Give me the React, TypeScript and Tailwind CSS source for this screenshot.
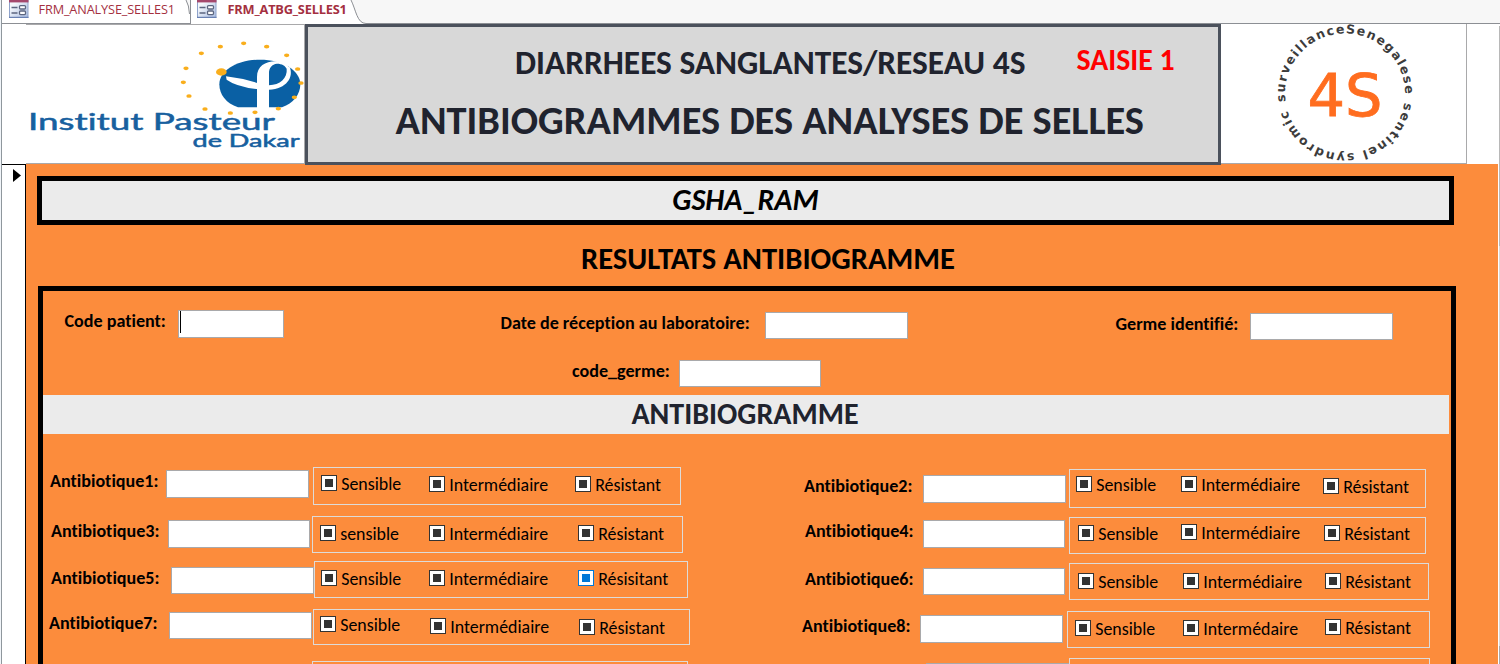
type OptionSpec = { text: string; box: string; active?: boolean };
type RowSpec = {
  label: string;
  row: string;
  labelBox: string;
  input: string;
  group: string;
  options: OptionSpec[];
};

const leftRows: RowSpec[] = [
  {
    label: "Antibiotique1:",
    row: "mt-[33px] h-[38px]",
    labelBox: "ml-[7px] mt-[4px] w-[116px]",
    input: "mt-[3px] h-[28px] w-[143px]",
    group: "ml-[4px] w-[368px]",
    options: [
      { text: "Sensible", box: "ml-[7px] mt-[7px] w-[108px]" },
      { text: "Intermédiaire", box: "mt-[8px] w-[146px]" },
      { text: "Résistant", box: "mt-[8px]" },
    ],
  },
  {
    label: "Antibiotique3:",
    row: "mt-[11px] h-[37px]",
    labelBox: "ml-[8px] mt-[5px] w-[117px]",
    input: "mt-[4px] h-[28px] w-[142px]",
    group: "ml-[2px] w-[371px]",
    options: [
      { text: "sensible", box: "ml-[7px] mt-[8px] w-[109px]" },
      { text: "Intermédiaire", box: "mt-[8px] w-[149px]" },
      { text: "Résistant", box: "mt-[8px]" },
    ],
  },
  {
    label: "Antibiotique5:",
    row: "mt-[8px] h-[37px]",
    labelBox: "ml-[8px] mt-[7px] w-[120px]",
    input: "mt-[6px] h-[27px] w-[143px]",
    group: "w-[374px]",
    options: [
      { text: "Sensible", box: "ml-[6px] mt-[8px] w-[108px]" },
      { text: "Intermédiaire", box: "mt-[8px] w-[149px]" },
      { text: "Résisitant", box: "mt-[8px]", active: true },
    ],
  },
  {
    label: "Antibiotique7:",
    row: "mt-[11px] h-[36px]",
    labelBox: "ml-[6px] mt-[4px] w-[120px]",
    input: "mt-[3px] h-[27px] w-[143px]",
    group: "ml-[1px] w-[377px]",
    options: [
      { text: "Sensible", box: "ml-[6px] mt-[6px] w-[110px]" },
      { text: "Intermédiaire", box: "mt-[8px] w-[149px]" },
      { text: "Résistant", box: "mt-[9px]" },
    ],
  },
];

const rightRows: RowSpec[] = [
  {
    label: "Antibiotique2:",
    row: "mt-[35px] h-[39px]",
    labelBox: "ml-[4px] mt-[7px] w-[119px]",
    input: "mt-[6px] h-[28px] w-[143px]",
    group: "ml-[3px] w-[357px]",
    options: [
      { text: "Sensible", box: "ml-[6px] mt-[6px] w-[105px]" },
      { text: "Intermédiaire", box: "mt-[6px] w-[142px]" },
      { text: "Résistant", box: "mt-[8px]" },
    ],
  },
  {
    label: "Antibiotique4:",
    row: "mt-[9px] h-[37px]",
    labelBox: "ml-[5px] mt-[4px] w-[118px]",
    input: "mt-[3px] h-[28px] w-[142px]",
    group: "ml-[4px] w-[357px]",
    options: [
      { text: "Sensible", box: "ml-[8px] mt-[7px] w-[103px]" },
      { text: "Intermédiaire", box: "mt-[6px] w-[143px]" },
      { text: "Résistant", box: "mt-[7px]" },
    ],
  },
  {
    label: "Antibiotique6:",
    row: "mt-[9px] h-[37px]",
    labelBox: "ml-[5px] mt-[6px] w-[118px]",
    input: "mt-[5px] h-[27px] w-[142px]",
    group: "ml-[4px] w-[360px]",
    options: [
      { text: "Sensible", box: "ml-[8px] mt-[9px] w-[105px]" },
      { text: "Intermédiaire", box: "mt-[9px] w-[142px]" },
      { text: "Résistant", box: "mt-[9px]" },
    ],
  },
  {
    label: "Antibiotique8:",
    row: "mt-[11px] h-[37px]",
    labelBox: "ml-[2px] mt-[5px] w-[118px]",
    input: "mt-[4px] h-[28px] w-[143px]",
    group: "ml-[4px] w-[363px]",
    options: [
      { text: "Sensible", box: "ml-[7px] mt-[8px] w-[108px]" },
      { text: "Intermédaire", box: "mt-[8px] w-[142px]" },
      { text: "Résistant", box: "mt-[7px]" },
    ],
  },
];

const labelText = "shrink-0 text-[18.1px] leading-[20px] font-bold whitespace-nowrap text-black";
const field = "shrink-0 border border-[#a9a9ab] bg-white";

function Option({ text, box, active }: OptionSpec) {
  return (
    <div className={`flex shrink-0 items-start ${box}`}>
      <span
        className={`flex size-[16px] shrink-0 items-center justify-center border bg-white ${
          active ? "border-[#0078d7]" : "border-[#333333]"
        }`}
      >
        <span className={`size-[8px] ${active ? "bg-[#0078d7]" : "bg-[#333333]"}`} />
      </span>
      <span className="-mt-px ml-[4.2px] text-[17.9px] leading-[20px] whitespace-nowrap text-black">{text}</span>
    </div>
  );
}

function Row({ label, row, labelBox, input, group, options }: RowSpec) {
  return (
    <div className={`flex shrink-0 items-start ${row}`}>
      <div className={`${labelText} ${labelBox}`}>{label}</div>
      <div className={`${field} ${input}`} />
      <div className={`flex h-full shrink-0 items-start border border-[#dddbd9] ${group}`}>
        {options.map((o) => (
          <Option key={o.text} {...o} />
        ))}
      </div>
    </div>
  );
}

function FormIcon() {
  return (
    <svg className="block shrink-0" width="20" height="18" viewBox="0 0 20 18">
      <defs>
        <linearGradient id="sheet" x1="0" y1="0" x2="1" y2="1">
          <stop offset="0.3" stopColor="#f4f7fc" />
          <stop offset="1" stopColor="#a9bce0" />
        </linearGradient>
      </defs>
      <rect x="0.5" y="-3" width="18.5" height="20.5" fill="url(#sheet)" stroke="#8fa3cb" />
      <rect x="0" y="0" width="19.5" height="2.4" fill="#a5486c" />
      <path d="M0 17.3H19.5" stroke="#5f78ad" />
      <path d="M2.5 7.5H8.5M2.5 13H8.5" stroke="#5c6680" strokeWidth="1.4" />
      <rect x="10.5" y="5.6" width="6" height="3.4" rx="1" fill="#fff" stroke="#5c6680" strokeWidth="1.3" />
      <rect x="10.5" y="11" width="6" height="3.6" rx="1" fill="#fff" stroke="#5c6680" strokeWidth="1.3" />
    </svg>
  );
}

const stars: [number, number][] = [
  [30, 94], [22, 136], [39, 177], [87, 216], [76, 49], [133, 29], [203, 19], [272, 29],
  [332, 55], [365, 96], [375, 138], [355, 181], [307, 215], [237, 226], [163, 228],
];

function PasteurLogo() {
  return (
    <svg className="block" width="278" height="138" viewBox="26 25 278 138">
      <g transform="translate(176 37) scale(0.33333)">
        <path
          d="M186 211C150 200 130 172 130 142C130 100 185 68 252 68C320 68 373 100 373 142C373 172 352 200 318 211Z"
          fill="#0a60a4"
        />
        <g fill="#fff">
          <path d="M150 118Q204 124 262 144V158Q185 152 152 128Z" />
          <path d="M243 216V120C243 88 268 73 298 73C318 73 334 82 343 96L334 98C328 86 318 80 303 80C288 82 279 92 279 108V216Z" />
          <path d="M341 90C354 120 332 156 279 158V145C312 144 335 125 332 94Z" />
        </g>
        {stars.map(([x, y]) => (
          <ellipse key={`${x}-${y}`} cx={x} cy={y} rx="8" ry="5.5" fill="#f9ae1c" />
        ))}
        <ellipse cx="136" cy="105" rx="16" ry="11" fill="#f9ae1c" />
      </g>
      <g fill="#17609f" stroke="#17609f" strokeWidth="0.5" fontFamily="Lato, sans-serif">
        <text x="28" y="129.5" fontSize="23.5" textLength="247" lengthAdjust="spacingAndGlyphs">
          Institut Pasteur
        </text>
        <text x="192.5" y="146.5" fontSize="17.5" textLength="107" lengthAdjust="spacingAndGlyphs">
          de Dakar
        </text>
      </g>
    </svg>
  );
}

const ringWords = [
  { text: "surveillance", start: 7.5, length: 102 },
  { text: "Senegalese", start: 110.5, length: 94 },
  { text: "sentinel", start: 213, length: 68 },
  { text: "syndromic", start: 289, length: 86 },
];

function NetworkLogo() {
  return (
    <svg className="block overflow-visible" width="245" height="138" viewBox="1221 25 245 138">
      <defs>
        <path id="ring" d="M1287.04 109.03A60 60 0 1 1 1402.96 77.97A60 60 0 1 1 1287.04 109.03" fill="none" />
      </defs>
      <g fontFamily="'DejaVu Sans', sans-serif" fontSize="12.5" fontWeight="700" fill="#3c3c3c">
        {ringWords.map((w) => (
          <text key={w.text}>
            <textPath href="#ring" startOffset={w.start} textLength={w.length}>
              {w.text}
            </textPath>
          </text>
        ))}
      </g>
      <text
        x="1307.5"
        y="116"
        fontFamily="'DejaVu Sans', sans-serif"
        fontSize="58.5"
        textLength="75"
        lengthAdjust="spacingAndGlyphs"
        fill="#ff6d1f"
        stroke="#ff6d1f"
        strokeWidth="0.8"
      >
        4S
      </text>
    </svg>
  );
}

function TabBar() {
  return (
    <div className="flex h-[24px] shrink-0 font-['Open_Sans',sans-serif] leading-[18px] whitespace-nowrap text-[#a4303f]">
      <div className="flex h-full w-[189px] shrink-0 border-r border-b border-[#8c8f94] bg-white pl-[7px]">
        <FormIcon />
        <span className="ml-[9.5px] w-[146.5px] text-[12.7px] tracking-[-0.12px]">FRM_ANALYSE_SELLES1</span>
        <svg className="block" width="5" height="14" viewBox="0 0 5 14">
          <path d="M1 0H5V13Z" fill="#f7f7f7" />
          <path d="M1 0Q4 5 4.5 14" fill="none" stroke="#8c8f94" />
        </svg>
      </div>
      <div className="flex h-full w-[158px] shrink-0 bg-white pl-[6px]">
        <FormIcon />
        <span className="ml-[10.5px] text-[12.8px] font-bold tracking-[-0.2px]">FRM_ATBG_SELLES1</span>
      </div>
      <svg className="block shrink-0" width="17" height="24" viewBox="0 0 17 24">
        <rect width="17" height="24" fill="#f7f7f7" />
        <path d="M0 0H2C7 10 8 23.5 17 23.5V24H0Z" fill="#fff" />
        <path d="M2 0C7 10 8 23.5 17 23.5" fill="none" stroke="#8c8f94" />
      </svg>
      <div className="h-full flex-1 border-b border-[#8c8f94] bg-[#f7f7f7]" />
    </div>
  );
}

export default function App() {
  return (
    <div className="flex h-[664px] w-[1500px] overflow-hidden bg-white font-[Carlito,Calibri,Lato,sans-serif] [font-variant-ligatures:none]">
      <div className="h-full w-[2px] shrink-0 border-r border-[#8f979d] bg-[#f1f5f9]" />
      <div className="flex h-full w-[1498px] shrink-0 flex-col">
        <TabBar />
        <div className="flex min-h-0 flex-1">
          <div className="flex w-[24px] shrink-0 flex-col">
            <div className="h-[140px] shrink-0" />
            <div className="flex-1 border-t border-r border-black pt-[4px] pl-[11px]">
              <svg className="block" width="9" height="14" viewBox="0 0 9 14">
                <path d="M0 0L8 6.5L0 13Z" fill="#000" />
              </svg>
            </div>
          </div>

          <div className="flex w-[1472px] shrink-0 flex-col">
            <header className="flex h-[140px] shrink-0">
              <div className="h-[140px] w-[279px] shrink-0 border-t border-r border-b border-[#a9a9ab]">
                <PasteurLogo />
              </div>
              <div className="relative z-10 h-[141px] w-[916px] shrink-0 border-[3px] border-[#4b515c] bg-[#d8d8d8] font-bold whitespace-nowrap text-[#20232e]">
                <div className="flex h-[74px] items-start">
                  <h1 className="mt-[19px] ml-[207px] w-[561.5px] text-[33.4px] leading-[34px]">
                    DIARRHEES SANGLANTES/RESEAU 4S
                  </h1>
                  <span className="mt-[16px] text-[29.8px] leading-[34px] text-[#ff0000]">SAISIE 1</span>
                </div>
                <h2 className="ml-[87.5px] text-[40.4px] leading-[40px]">ANTIBIOGRAMMES DES ANALYSES DE SELLES</h2>
              </div>
              <div className="h-[140px] w-[246px] shrink-0 border-r border-b border-[#a9a9ab] pt-px">
                <NetworkLogo />
              </div>
            </header>

            <main className="flex min-h-0 flex-1 flex-col bg-[#fc8c3c]">
              <div className="mt-[12px] ml-[11px] h-[49px] w-[1417px] shrink-0 border-[5px] border-black bg-[#ebebeb] text-center text-[30px] leading-[38px] font-bold text-black italic">
                GSHA_RAM
              </div>
              <div className="h-[61px] shrink-0 pt-[14px] pl-[555px] text-[30.6px] leading-[40px] font-bold whitespace-nowrap text-black">
                RESULTATS ANTIBIOGRAMME
              </div>
              <section className="ml-[12px] flex min-h-0 w-[1418px] flex-1 flex-col overflow-hidden border-x-[5px] border-t-[5px] border-black">
                <div className="flex h-[69px] shrink-0 items-start">
                  <div className={`${labelText} mt-[20px] ml-[21.5px] w-[113.5px]`}>Code patient:</div>
                  <div className={`${field} mt-[19px] h-[28px] w-[106px] pl-px`}>
                    <div className="h-[22px] w-px bg-black" />
                  </div>
                  <div className={`${labelText} mt-[22px] ml-[216.5px] w-[264.5px]`}>Date de réception au laboratoire:</div>
                  <div className={`${field} mt-[21px] h-[27px] w-[143px]`} />
                  <div className={`${labelText} mt-[23px] ml-[207.5px] w-[134.5px]`}>Germe identifié:</div>
                  <div className={`${field} mt-[22px] h-[27px] w-[143px]`} />
                </div>
                <div className="flex h-[35px] shrink-0 items-start">
                  <div className={`${labelText} mt-px ml-[529px] w-[107px]`}>code_germe:</div>
                  <div className={`${field} h-[27px] w-[142px]`} />
                </div>
                <h3 className="h-[39px] w-[1406px] shrink-0 bg-[#ebebeb] pr-[2px] text-center text-[30px] leading-[38px] font-bold text-[#20232e]">
                  ANTIBIOGRAMME
                </h3>
                <div className="flex min-h-0 flex-1 overflow-hidden">
                  <div className="flex w-[757px] shrink-0 flex-col">
                    {leftRows.map((r) => (
                      <Row key={r.label} {...r} />
                    ))}
                    <div className="mt-[16px] ml-[269px] h-[37px] w-[376px] shrink-0 border border-[#dddbd9]" />
                  </div>
                  <div className="flex w-[651px] shrink-0 flex-col">
                    {rightRows.map((r) => (
                      <Row key={r.label} {...r} />
                    ))}
                    <div className="mt-[10px] ml-[126px] flex h-[37px] shrink-0 items-start">
                      <div className={`${field} mt-[5px] h-[27px] w-[143px]`} />
                      <div className="h-[37px] w-[361px] shrink-0 border border-[#dddbd9]" />
                    </div>
                  </div>
                </div>
              </section>
            </main>
          </div>
          <div className="flex w-[2px] shrink-0 flex-col pl-px">
            <div className="h-[2px] bg-white" />
            <div className="h-[220px] bg-[#b8b8b8]" />
            <div className="h-[400px] bg-[#d9d9d9]" />
            <div className="flex-1 bg-[#a9a9ab]" />
          </div>
        </div>
      </div>
    </div>
  );
}
